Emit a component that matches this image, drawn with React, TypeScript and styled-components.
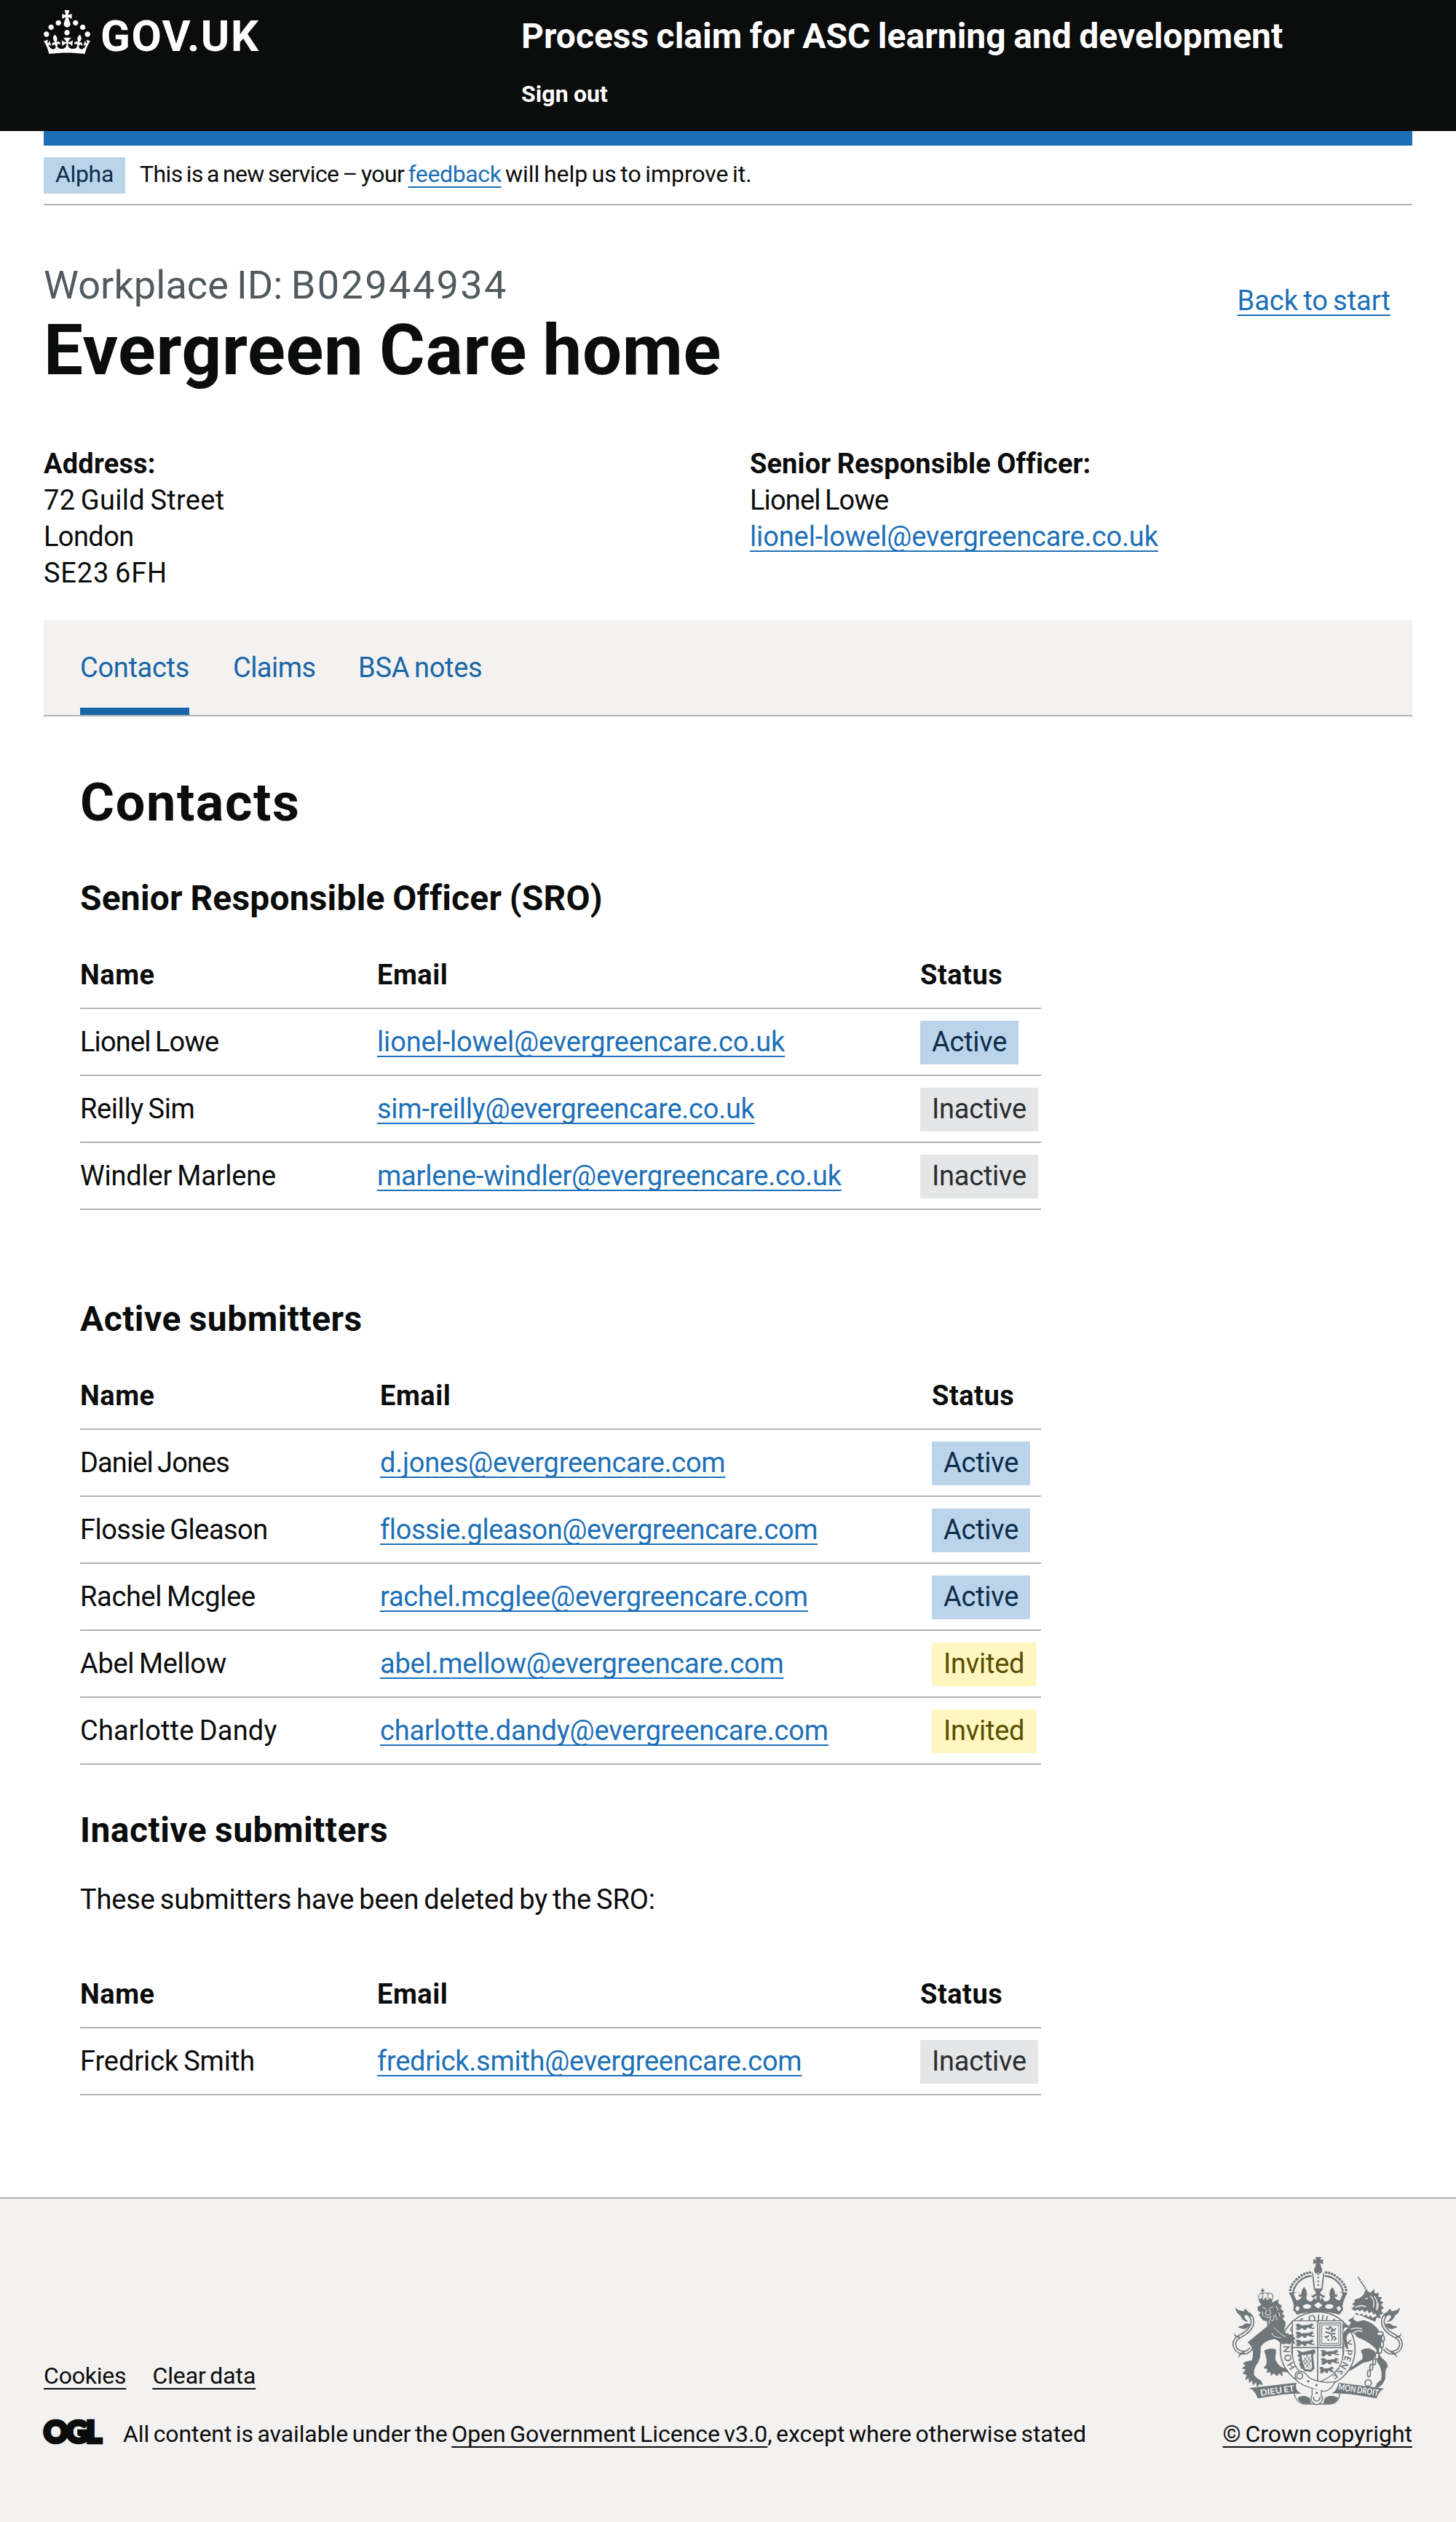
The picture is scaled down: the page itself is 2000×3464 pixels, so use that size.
import React from "react";
import styled, { createGlobalStyle, css } from "styled-components";

const c = {
  black: "#0b0c0c",
  link: "#1d70b8",
  tab: "#1a65a6",
  border: "#b1b4b6",
  light: "#f3f2f1",
  secondary: "#505a5f",
  crest: "#6f777b",
};

const Global = createGlobalStyle`
  *, *::before, *::after { box-sizing: border-box; }
  body {
    margin: 0;
    background: #fff;
    color: ${c.black};
    font-family: Roboto, "Liberation Sans", Arial, sans-serif;
    font-size: 38px;
    line-height: 50px;
    word-spacing: -0.06em;
  }
`;

const bold = css`
  font-weight: 700;
  word-spacing: -0.03em;
`;

const Page = styled.div`
  display: flex;
  flex-direction: column;
  min-height: 3464px;
`;

/* `$t` is tracking in pixels */
const Track = styled.span<{ $t: number }>`
  letter-spacing: ${(p) => p.$t}px;
`;

const Link = styled.a<{ $t?: number; $dark?: boolean }>`
  color: ${(p) => (p.$dark ? c.black : c.link)};
  letter-spacing: ${(p) => p.$t ?? 0}px;
  text-decoration: underline;
  text-decoration-thickness: 2px;
  text-decoration-skip-ink: none;
  text-underline-offset: 6px;
  white-space: nowrap;
`;

/* Header */
const HeaderBar = styled.header`
  height: 180px;
  padding: 0 60px;
  background: ${c.black};
  color: #fff;
  display: grid;
  grid-template-columns: 656px 1fr;
`;
const Logo = styled.div`
  display: flex;
  align-items: flex-start;
  padding-top: 14px;
`;
const LogoText = styled.span`
  margin: 6px 0 0 14px;
  font-size: 60px;
  line-height: 60px;
  font-weight: 700;
  letter-spacing: 1.5px;
`;
const HeaderContent = styled.div`
  padding-top: 20px;
`;
const ServiceName = styled.div`
  ${bold}
  font-size: 48px;
  line-height: 60px;
`;
const SignOut = styled.a`
  ${bold}
  display: block;
  margin-top: 29px;
  font-size: 32px;
  line-height: 40px;
  letter-spacing: 0.1px;
`;

const Container = styled.div`
  margin: 0 60px;
`;
const BlueBar = styled.div`
  height: 20px;
  background: ${c.link};
`;
const Phase = styled.div`
  display: flex;
  align-items: flex-start;
  height: 82px;
  padding-top: 16px;
  border-bottom: 2px solid ${c.border};
  font-size: 32px;
  line-height: 40px;
`;
const PhaseTag = styled.strong`
  width: 112px;
  padding: 3px 16px 7px;
  margin-right: 20px;
  background: #bbd4ea;
  color: #0c2d4a;
  font-weight: 400;
  letter-spacing: -0.34px;
`;
const PhaseText = styled.span`
  padding-top: 3px;
  white-space: pre;
`;

/* Workplace title */
const TitleRow = styled.div`
  display: flex;
  justify-content: space-between;
  padding: 80px 30px 0 0;
`;
const Caption = styled.div`
  color: ${c.secondary};
  font-size: 54px;
  line-height: 60px;
`;
const Title = styled.h1`
  ${bold}
  margin: 9px 0 0;
  font-size: 96px;
  line-height: 100px;
  letter-spacing: 0.65px;
`;
const BackLink = styled.div`
  padding-top: 26px;
`;
const Details = styled.div`
  display: grid;
  grid-template-columns: 970px 1fr;
  margin-top: 81px;
`;
const Line = styled.div<{ $t?: number; $b?: boolean }>`
  ${(p) => p.$b && bold}
  letter-spacing: ${(p) => p.$t ?? 0}px;
`;

/* Tabs */
const Tabs = styled.nav`
  display: flex;
  gap: 60px;
  height: 132px;
  margin-top: 40px;
  padding: 40px 50px 0;
  background: ${c.light};
  border-bottom: 2px solid ${c.border};
`;
const Tab = styled.a<{ $on?: boolean; $w: number; $t: number }>`
  width: ${(p) => p.$w}px;
  height: 90px;
  color: ${c.tab};
  letter-spacing: ${(p) => p.$t}px;
  white-space: nowrap;
  border-bottom: 10px solid ${(p) => (p.$on ? c.tab : "transparent")};
`;

/* Panel */
const Panel = styled.main`
  width: 1320px;
  margin: 79px 0 0 50px;
`;
const H2 = styled.h2`
  margin: 0 0 61px;
  font-size: 72px;
  line-height: 80px;
  letter-spacing: 1.6px;
`;
const H3 = styled.h3<{ $top?: number; $bottom?: number; $t: number }>`
  ${bold}
  margin: ${(p) => p.$top ?? 0}px 0 ${(p) => p.$bottom ?? 30}px;
  font-size: 48px;
  line-height: 60px;
  letter-spacing: ${(p) => p.$t}px;
`;
const Note = styled.p`
  margin: 0 0 60px;
  letter-spacing: -0.15px;
`;
const Table = styled.div<{ $cols: string }>`
  > div {
    display: grid;
    grid-template-columns: ${(p) => p.$cols};
    padding: 20px 0;
    border-bottom: 2px solid ${c.border};
    white-space: nowrap;
  }
`;
const Head = styled.div`
  ${bold}
  letter-spacing: 0.5px;
`;
const Row = styled.div``;
const tones = {
  Active: css`
    width: 135px;
    background: #bbd4ea;
    color: #0c2d4a;
  `,
  Inactive: css`
    width: 162px;
    background: #e5e6e7;
    color: #282d30;
  `,
  Invited: css`
    width: 144px;
    background: #fff7bf;
    color: #594d00;
  `,
};
type Status = keyof typeof tones;
const Tag = styled.strong<{ $s: Status }>`
  margin: -4px 0 -6px;
  padding: 4px 0 6px 16px;
  font-weight: 400;
  letter-spacing: -0.25px;
  ${(p) => tones[p.$s]}
`;

type Person = { name: string; nt: number; email: string; et: number; status: Status };
const sro: Person[] = [
  { name: "Lionel Lowe", nt: -0.85, email: "lionel-lowel@evergreencare.co.uk", et: -0.15, status: "Active" },
  { name: "Reilly Sim", nt: -0.4, email: "sim-reilly@evergreencare.co.uk", et: -0.25, status: "Inactive" },
  { name: "Windler Marlene", nt: -0.2, email: "marlene-windler@evergreencare.co.uk", et: -0.22, status: "Inactive" },
];
const active: Person[] = [
  { name: "Daniel Jones", nt: -0.9, email: "d.jones@evergreencare.com", et: -0.27, status: "Active" },
  { name: "Flossie Gleason", nt: -0.55, email: "flossie.gleason@evergreencare.com", et: -0.41, status: "Active" },
  { name: "Rachel Mcglee", nt: -0.35, email: "rachel.mcglee@evergreencare.com", et: -0.24, status: "Active" },
  { name: "Abel Mellow", nt: -0.35, email: "abel.mellow@evergreencare.com", et: -0.25, status: "Invited" },
  { name: "Charlotte Dandy", nt: 0.15, email: "charlotte.dandy@evergreencare.com", et: -0.15, status: "Invited" },
];
const inactive: Person[] = [
  { name: "Fredrick Smith", nt: -0.1, email: "fredrick.smith@evergreencare.com", et: -0.28, status: "Inactive" },
];

function People({ rows, cols }: { rows: Person[]; cols: string }) {
  return (
    <Table $cols={cols}>
      <Head>
        <span>Name</span>
        <span>Email</span>
        <span>Status</span>
      </Head>
      {rows.map((r) => (
        <Row key={r.name}>
          <Track $t={r.nt}>{r.name}</Track>
          <span>
            <Link $t={r.et}>{r.email}</Link>
          </span>
          <Tag $s={r.status}>{r.status}</Tag>
        </Row>
      ))}
    </Table>
  );
}

/* Footer */
const Footer = styled.footer`
  display: flex;
  justify-content: space-between;
  align-items: flex-end;
  flex: 1;
  margin-top: 140px;
  padding: 0 60px 101px;
  background: ${c.light};
  border-top: 2px solid ${c.border};
  font-size: 32px;
  line-height: 40px;
`;
const FooterLinks = styled.div`
  display: flex;
  gap: 36px;
  margin-bottom: 40px;
`;
const Licence = styled.div`
  display: flex;
  align-items: flex-start;
`;
const Ogl = styled.span`
  width: 82px;
  height: 40px;
  margin-right: 27px;
  font-family: Lato, Roboto, sans-serif;
  font-weight: 900;
  font-size: 41px;
  line-height: 34px;
  letter-spacing: -2.4px;
  -webkit-text-stroke: 4.5px ${c.black};
`;
const Copyright = styled.div`
  display: flex;
  flex-direction: column;
  align-items: center;
  gap: 19px;
`;

function Crown() {
  return (
    <svg width="64" height="60" viewBox="0 0 32 30" fill="#fff" fillRule="evenodd">
      <path d="M22.6 10.4c-1 .4-2-.1-2.4-1-.4-.9.1-2 1-2.4.9-.4 2 .1 2.4 1s-.1 2-1 2.4m-5.9 6.7c-.9.4-2-.1-2.4-1-.4-.9.1-2 1-2.4.9-.4 2 .1 2.4 1s-.1 2-1 2.4m10.8-3.7c-1 .4-2-.1-2.4-1-.4-.9.1-2 1-2.4.9-.4 2 .1 2.4 1s0 2-1 2.4m3.3 4.8c-1 .4-2-.1-2.4-1-.4-.9.1-2 1-2.4.9-.4 2 .1 2.4 1s-.1 2-1 2.4M17 4.7l2.3 1.2V2.5l-2.3.7-.2-.2.9-3h-3.4l.9 3-.2.2c-.1.1-2.3-.7-2.3-.7v3.4L15 4.7c.1.1.1.2.2.2l-1.3 4c-.1.2-.1.4-.1.6 0 1.1.8 2 1.9 2.2h.7c1-.2 1.9-1.1 1.9-2.1 0-.2 0-.4-.1-.6l-1.3-4c-.1-.2 0-.2.1-.3m-7.6 5.7c.9.4 2-.1 2.4-1 .4-.9-.1-2-1-2.4-.9-.4-2 .1-2.4 1s0 2 1 2.4m-5 3c.9.4 2-.1 2.4-1 .4-.9-.1-2-1-2.4-.9-.4-2 .1-2.4 1s.1 2 1 2.4m-3.2 4.8c.9.4 2-.1 2.4-1 .4-.9-.1-2-1-2.4-.9-.4-2 .1-2.4 1s0 2 1 2.4m14.8 11c4.4 0 8.6.3 12.3.8 1.1-4.5 2.4-7 3.7-8.8l-2.5-.9c.2 1.3.3 1.9 0 2.7-.4-.4-.8-1.1-1.1-2.3l-1.2 4c.7-.5 1.3-.8 2-.9-1.1 2.5-2.6 3.1-3.5 3-1.1-.2-1.7-1.2-1.5-2.1.3-1.2 1.5-1.5 2.1-.1 1.1-2.3-.8-3-2-2.3 1.9-1.9 2.1-3.5.6-5.6-2.1 1.6-2.1 3.2-1.2 5.5-1.2-1.4-3.2-.6-2.5 1.6.9-1.4 2.1-.5 1.9.8-.2 1.1-1.7 2.1-3.5 1.9-2.7-.2-2.9-2.1-2.9-3.6.7-.1 1.9.5 2.9 1.9l.4-4.3c-1.1 1.1-2.1 1.4-3.2 1.4.4-1.2 2.1-3 2.1-3h-5.4s1.7 1.9 2.1 3c-1.1 0-2.1-.2-3.2-1.4l.4 4.3c1-1.4 2.2-2 2.9-1.9-.1 1.5-.2 3.4-2.9 3.6-1.9.2-3.4-.8-3.5-1.9-.2-1.3 1-2.2 1.9-.8.7-2.3-1.2-3-2.5-1.6.9-2.2.9-3.9-1.2-5.5-1.5 2-1.3 3.7.6 5.6-1.2-.7-3.1 0-2 2.3.6-1.4 1.8-1.1 2.1.1.2.9-.3 1.9-1.5 2.1-.9.2-2.4-.5-3.5-3 .6 0 1.2.3 2 .9l-1.2-4c-.3 1.1-.7 1.9-1.1 2.3-.3-.8-.2-1.4 0-2.7l-2.9.9C1.3 23 2.6 25.5 3.7 30c3.7-.5 7.9-.8 12.3-.8" />
    </svg>
  );
}

/* One passant lion of the arms, about 80 by 28 units */
const smallLion =
  "M2 6l10-4 10 2 4 5 14-1 16-1 8-5 12 1-8 4 10 2-12 4 2 4 12 1-6 5-14-2-4-4-12 3 4 5-12 1-4-6-8 1-4 5-14 2 4-5-8-1 10-5-8-2 6-3z";

function Tail() {
  return (
    <g>
      <path
        d="M176 436C158 466 114 456 108 424C104 394 134 388 152 374C184 352 194 318 166 294"
        fill="none"
        stroke={c.crest}
        strokeWidth="16"
      />
      <path
        d="M176 436C158 466 114 456 108 424C104 394 134 388 152 374C184 352 194 318 166 294"
        fill="none"
        stroke={c.light}
        strokeWidth="6"
      />
      <path d="M112 266C120 282 136 280 148 284C146 278 150 274 156 274C158 284 176 292 180 306C168 300 156 296 150 302C146 310 156 318 166 326C150 328 138 318 132 300C122 296 112 284 112 266Z" />
      <path d="M172 336C158 330 146 336 140 344C132 342 124 346 122 352C134 348 136 360 150 356C160 356 170 348 172 336Z" />
      <path d="M106 372C104 386 116 396 134 392L126 386C116 386 110 382 106 372Z" />
      <path d="M124 476C124 460 134 450 156 446L146 458C136 460 130 466 124 476Z" />
    </g>
  );
}

function Crest() {
  const pearls: [number, number][] = [
    [338, 196], [341, 184], [347, 173], [355, 162], [364, 152], [374, 144], [385, 136], [396, 130], [408, 126], [420, 124],
  ];
  return (
    <svg width="250" height="204" viewBox="76 60 750 612" fill={c.crest}>
      <defs>
        <path id="garter" d="M451 555A115 115 0 1 1 452 555" />
      </defs>

      {/* crown */}
      <path d="M442 60h24l-5 13 12-5v22l-12-5 5 16h-26l5-16-12 5V68l12 5z" />
      <circle cx="453" cy="114" r="17" />
      <path d="M432 122L440 188H434L428 130ZM474 122L466 188H472L478 130Z" />
      {[130, 145, 160, 175].map((y) => (
        <circle key={y} cx="453" cy={y} r="5" stroke={c.light} strokeWidth="2" />
      ))}
      {pearls.map(([x, y]) => (
        <g key={x}>
          <circle cx={x} cy={y} r="5.5" />
          <circle cx={906 - x} cy={y} r="5.5" />
        </g>
      ))}
      <path
        d="M350 202C360 165 390 140 426 138M556 202C546 165 516 140 480 138"
        fill="none"
        stroke={c.crest}
        strokeWidth="7"
      />
      <path d="M332 207L356 203L384 214C382 204 388 192 395 184C402 192 408 204 406 214L424 210L428 220C436 216 442 212 445 208L432 190H474L461 208C464 212 470 216 478 220L482 210L500 214C498 204 504 192 511 184C518 192 524 204 522 214L550 203L574 207C562 228 556 246 553 262L556 278L540 298C490 282 414 282 366 298L350 278L353 262C350 246 344 228 332 207Z" />
      <g fill={c.light}>
        <path d="M352 212L363 238C372 240 384 232 386 222C380 228 370 224 374 215L386 216L360 205ZM554 212L543 238C534 240 522 232 520 222C526 228 536 224 532 215L520 216L546 205Z" />
        <path d="M405 220C400 236 414 246 426 242C434 238 430 230 440 228L444 240L447 218L436 226C424 232 424 220 428 214L416 206L408 214ZM501 220C506 236 492 246 480 242C472 238 476 230 466 228L462 240L459 218L470 226C482 232 482 220 478 214L490 206L498 214Z" />
        <ellipse cx="407" cy="264" rx="17" ry="10" />
        <ellipse cx="499" cy="264" rx="17" ry="10" />
        <path d="M453 246l18 13-18 13-18-13zM366 262l12 8-10 14-10-10zM540 262l-12 8 10 14 10-10z" />
      </g>

      {/* garter */}
      <circle cx="451" cy="440" r="154" fill={c.light} stroke={c.crest} strokeWidth="5" />
      <circle cx="451" cy="440" r="108" fill="none" stroke={c.crest} strokeWidth="4" />
      <text fontFamily="Lato, sans-serif" fontSize="38" fontWeight="700">
        <textPath href="#garter" startOffset="14%" textLength="566">
          HONI SOIT QUI MAL Y PENSE
        </textPath>
      </text>

      {/* shield */}
      <path
        d="M347 323H555V462C552 520 510 556 451 578C392 556 350 520 347 462Z"
        fill={c.light}
        stroke={c.crest}
        strokeWidth="4"
      />
      <path d="M451 323V576M347 433H555" stroke={c.crest} strokeWidth="5" fill="none" />
      {[332, 365, 398].map((y) => (
        <path key={y} d={smallLion} transform={`translate(356 ${y}) scale(1.05 1.1)`} />
      ))}
      {[440, 474].map((y) => (
        <path key={y} d={smallLion} transform={`translate(460 ${y}) scale(1.02 1.1)`} />
      ))}
      <path d={smallLion} transform="translate(456 510) scale(.8 1.1)" />
      <g fill="none" stroke={c.crest}>
        <rect x="460" y="332" width="86" height="92" strokeWidth="4" />
        <rect x="468" y="340" width="70" height="76" strokeWidth="3" />
        <path
          d="M484 352L496 358L502 348L512 356L508 366L520 362L526 354M482 368L494 372L508 378L524 374M498 384L486 392L480 386M506 382L514 392L508 404M518 386L526 396L518 404M490 400L500 404"
          strokeWidth="6"
        />
      </g>
      <path d="M364 442L388 452L438 440L442 452L432 466L438 520L424 534L396 530L386 516L392 512L400 522L422 524L428 514L424 460L392 466L384 462L388 490L398 518L384 522L374 500L380 494L370 484L378 476L366 466L374 460Z" />
      <path
        d="M394 474L424 512M404 466L426 494M390 486L418 520M424 466L392 508M424 482L402 518M412 464L390 494"
        stroke={c.crest}
        strokeWidth="3"
      />

      {/* lion */}
      <path d="M221 190h6v6h5v4h-5v8h-6v-8h-5v-4h5z" />
      <path
        d="M212 246L207 222C210 210 218 207 224 212C230 207 240 207 246 210C258 206 268 212 266 226L260 246M224 212V232M246 210V232"
        fill="none"
        stroke={c.crest}
        strokeWidth="5"
        strokeDasharray="5 2"
      />
      <path d="M210 236L220 228L228 238L236 226L244 238L254 228L264 236L260 252H214Z" />
      <path d="M204 264L218 258L216 248L262 248L290 234L288 250L304 262L298 272L312 286L304 292L316 306L306 312L318 330L296 332L283 348L262 342L243 346L243 326L225 320L208 298L216 290L204 280Z" />
      <path
        d="M224 268l14 4M252 272l14-6M242 276l-8 18 12 6 12-6-6-18M232 304l12 6 14-6M256 308c-2 14 4 18 12 12l4-20M280 262l8 18M290 288l6 18M276 296l8 24M222 284l4 20M250 320l2 16"
        stroke={c.light}
        strokeWidth="3"
        fill="none"
      />
      <path d="M243 346C215 368 190 390 162 412C176 422 186 440 184 468L180 486C165 487 150 492 143 500L154 508L138 518L154 524L141 540L158 546L152 567L167 560L168 580L181 569L184 590L197 576L200 596L212 584L226 588L218 569L204 562L190 548C186 530 192 512 206 494C214 480 218 450 216 432C225 415 245 402 270 398C286 400 294 410 298 416L314 420L322 412L334 420L342 412L360 420L352 404L360 396L350 388L354 380L338 382L318 372C305 360 330 330 312 322L288 330Z" />
      <path
        d="M262 372C266 390 284 392 300 392M270 350C284 366 300 378 320 390"
        stroke={c.light}
        strokeWidth="3"
        fill="none"
      />
      <path d="M230 447C245 436 265 434 280 442L276 480Q284 502 300 512L328 524L326 536L306 532L306 552L292 540L284 552L270 540L258 550L256 534L240 538L244 522L228 518L240 502Q244 480 230 447Z" />
      <Tail />

      {/* unicorn */}
      <path d="M618 143L658 206" stroke={c.crest} strokeWidth="7" strokeDasharray="7 3" />
      <path d="M648 196L668 208L684 192L686 210L704 208L700 224L716 226L708 240L722 246L712 258L724 270L712 280L722 294L706 298L712 312L694 310L688 326L662 316L626 300L606 296L602 282L590 272L604 262L592 254L604 246L602 236L626 228L640 216Z" />
      <path
        d="M646 232l12-2M606 268c16-8 34-8 44-2M668 220c16 14 18 30 12 48M684 222c16 18 14 36 8 52M700 250c2 14-2 24-6 30"
        stroke={c.light}
        strokeWidth="4"
        fill="none"
      />
      <path
        d="M602 288L616 284L624 292L634 284L642 296L654 288L660 300L672 292L678 304L692 298"
        stroke={c.light}
        strokeWidth="11"
        fill="none"
      />
      <path d="M602 300L598 316L612 326L640 320C668 326 702 346 712 384C726 412 714 438 706 462C714 480 742 492 740 512C722 532 736 556 726 570C716 590 706 600 686 600L696 580L712 566C718 540 712 520 704 504C694 494 690 470 694 444C680 424 652 404 616 392L598 372C584 366 570 378 570 396L574 418L578 440L564 432L556 398C552 370 566 352 592 352L560 350C552 344 556 336 566 336L580 344L588 330L576 320L596 310Z" />
      <path d="M588 358C602 350 618 352 634 356M600 372C614 362 624 364 636 366" stroke={c.light} strokeWidth="4" fill="none" />
      <path d="M628 446C650 430 674 436 690 452L684 480C668 492 650 492 634 498C616 510 606 518 582 530L588 514C606 508 616 490 632 484C640 474 636 458 628 446Z" />
      <g transform="translate(902 0) scale(-1 1)">
        <Tail />
      </g>
      <g fill={c.light} stroke={c.crest} strokeWidth="5">
        <ellipse cx="708" cy="376" rx="13" ry="8" />
        <ellipse cx="720" cy="396" rx="6" ry="12" />
        <ellipse cx="716" cy="420" rx="6" ry="13" />
        <ellipse cx="708" cy="444" rx="7" ry="13" />
        <ellipse cx="696" cy="468" rx="7" ry="13" />
        <ellipse cx="684" cy="492" rx="6" ry="12" />
        <ellipse cx="672" cy="514" rx="6" ry="12" />
        <ellipse cx="662" cy="540" rx="6" ry="14" />
        <circle cx="659" cy="579" r="13" />
      </g>

      {/* belt */}
      <path
        d="M360 540C364 530 384 528 396 536L420 560C450 574 490 580 522 574C512 598 500 612 476 614C440 606 400 596 372 576C362 566 356 552 360 540Z"
        fill={c.light}
        stroke={c.crest}
        strokeWidth="4"
      />
      <circle cx="377" cy="550" r="12" fill={c.light} stroke={c.crest} strokeWidth="5" />
      <circle cx="412" cy="572" r="5" />
      <circle cx="446" cy="588" r="5" />

      {/* ribbon */}
      <path d="M168 600L364 578C356 600 366 616 388 624C330 620 270 632 204 643C196 620 186 606 168 600Z" />
      <path d="M726 602L538 578C530 600 528 612 508 622C570 620 630 632 694 643C702 620 710 608 726 602Z" />
      <path
        d="M354 622C360 650 372 664 398 666H500C526 664 540 650 542 622"
        fill="none"
        stroke={c.crest}
        strokeWidth="4"
      />
      <path d="M368 640C384 628 412 630 420 646L424 664H390C378 660 370 652 368 640ZM534 640C518 628 486 630 478 646L474 664H508C524 660 532 652 534 640Z" />
      <path
        d="M428 602V630C420 640 420 660 447 669C474 660 474 640 466 630V608"
        fill={c.light}
        stroke={c.crest}
        strokeWidth="4"
      />
      <path d="M434 636C430 660 464 660 460 636" fill="none" stroke={c.crest} strokeWidth="5" />
      <circle cx="447" cy="620" r="5" />
      <g fill={c.light} fontFamily="Lato, sans-serif" fontWeight="700" fontSize="36">
        <text transform="translate(216 633) rotate(-8)" textLength="142" lengthAdjust="spacingAndGlyphs">
          DIEU ET
        </text>
        <text transform="translate(534 607) rotate(9)" textLength="168" lengthAdjust="spacingAndGlyphs">
          MON DROIT
        </text>
      </g>
    </svg>
  );
}

export default function App() {
  return (
    <Page>
      <Global />
      <HeaderBar>
        <Logo>
          <Crown />
          <LogoText>GOV.UK</LogoText>
        </Logo>
        <HeaderContent>
          <ServiceName>Process claim for ASC learning and development</ServiceName>
          <SignOut>Sign out</SignOut>
        </HeaderContent>
      </HeaderBar>

      <Container>
        <BlueBar />
        <Phase>
          <PhaseTag>Alpha</PhaseTag>
          <PhaseText>
            <Track $t={-0.58}>{"This is a new service – your "}</Track>
            <Link $t={-0.38}>feedback</Link>
            <Track $t={-0.05}>{" will help us to improve it."}</Track>
          </PhaseText>
        </Phase>

        <TitleRow>
          <div>
            <Caption>
              <Track $t={0.07}>Workplace ID: </Track>
              <Track $t={2.4}>B02944934</Track>
            </Caption>
            <Title>Evergreen Care home</Title>
          </div>
          <BackLink>
            <Link>Back to start</Link>
          </BackLink>
        </TitleRow>

        <Details>
          <div>
            <Line $b $t={0.2}>Address:</Line>
            <Line $t={0.3}>72 Guild Street</Line>
            <Line $t={-0.6}>London</Line>
            <Line $t={0.8}>SE23 6FH</Line>
          </div>
          <div>
            <Line $b $t={0.1}>Senior Responsible Officer:</Line>
            <Line $t={-0.85}>Lionel Lowe</Line>
            <Link $t={-0.13}>lionel-lowel@evergreencare.co.uk</Link>
          </div>
        </Details>

        <Tabs>
          <Tab $on $w={150} $t={-0.3}>Contacts</Tab>
          <Tab $w={112} $t={-0.55}>Claims</Tab>
          <Tab $w={170} $t={-0.3}>BSA notes</Tab>
        </Tabs>

        <Panel>
          <H2>Contacts</H2>
          <H3 $t={0.17}>Senior Responsible Officer (SRO)</H3>
          <People rows={sro} cols="408px 746px 166px" />
          <H3 $top={120} $t={0.45}>Active submitters</H3>
          <People rows={active} cols="412px 758px 150px" />
          <H3 $top={60} $bottom={40} $t={0.45}>Inactive submitters</H3>
          <Note>These submitters have been deleted by the SRO:</Note>
          <People rows={inactive} cols="408px 746px 166px" />
        </Panel>
      </Container>

      <Footer>
        <div>
          <FooterLinks>
            <Link $dark $t={-0.2}>Cookies</Link>
            <Link $dark $t={-0.1}>Clear data</Link>
          </FooterLinks>
          <Licence>
            <Ogl>OGL</Ogl>
            <span>
              <Track $t={-0.1}>{"All content is available under the "}</Track>
              <Link $dark $t={-0.05}>Open Government Licence v3.0</Link>
              <Track $t={-0.05}>, except where otherwise stated</Track>
            </span>
          </Licence>
        </div>
        <Copyright>
          <Crest />
          <Link $dark>© Crown copyright</Link>
        </Copyright>
      </Footer>
    </Page>
  );
}
